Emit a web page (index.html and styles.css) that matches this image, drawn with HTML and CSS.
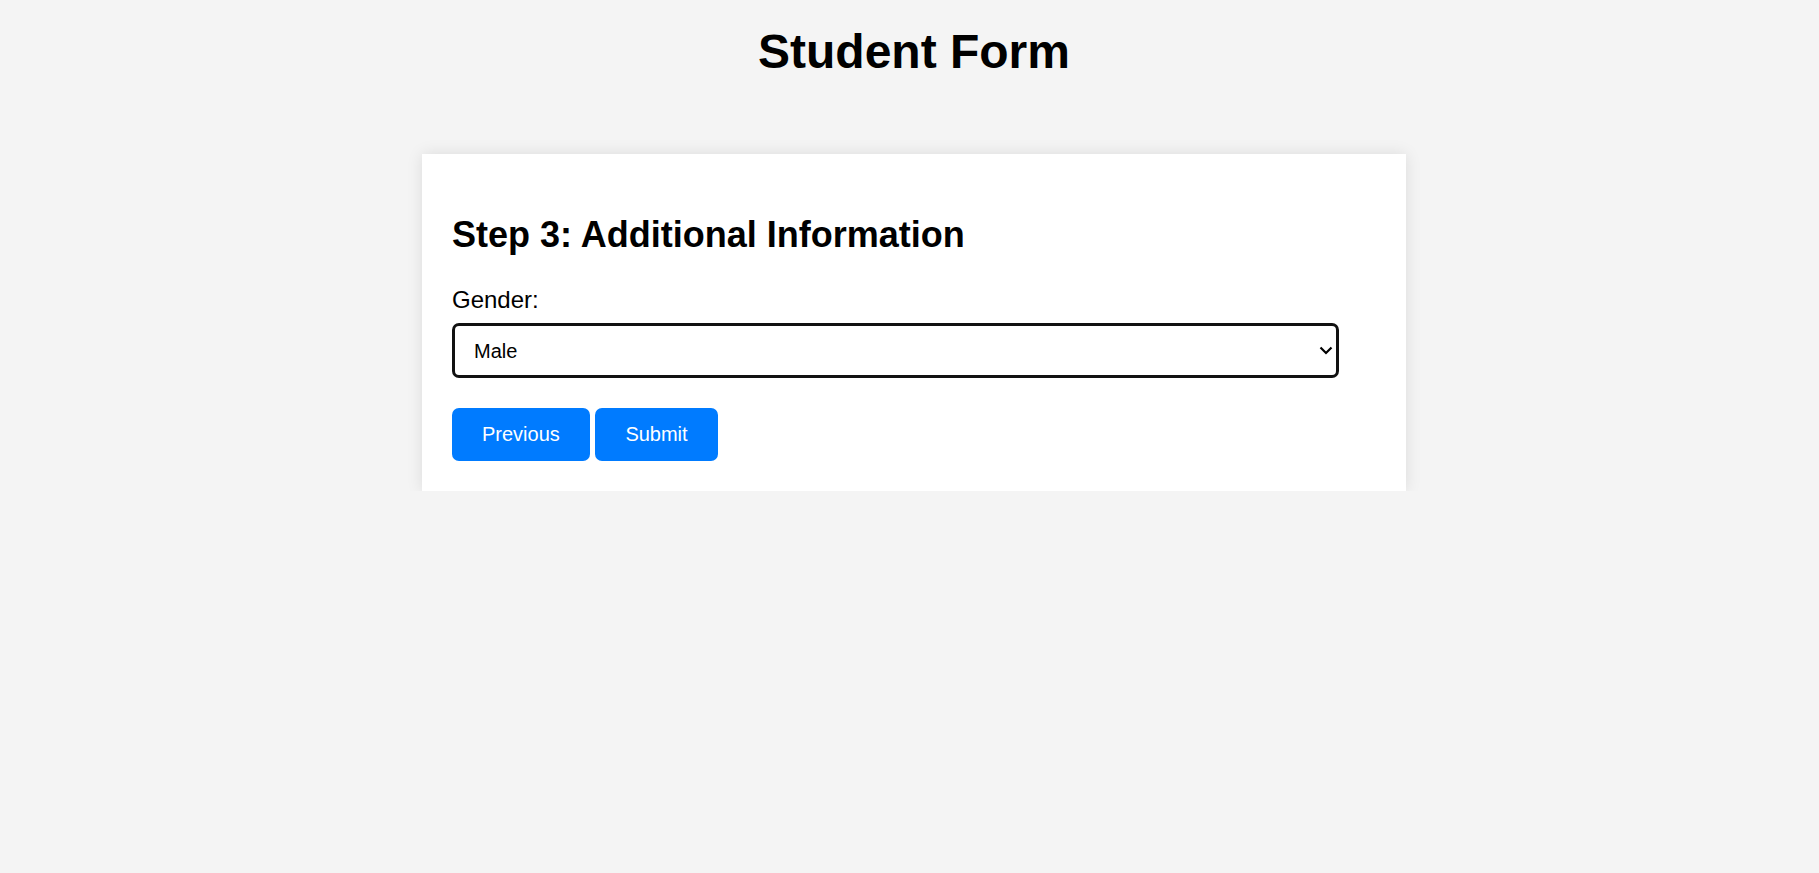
FILE: index.html
```html
<!DOCTYPE html>
<html lang="en">
<head>
<meta charset="utf-8">
<title>Student Form</title>
<link rel="stylesheet" href="styles.css">
</head>
<body>
<h1 class="page-title">Student Form</h1>
<form class="card">
  <h2 class="step-title">Step 3: Additional Information</h2>
  <label class="field-label" for="gender">Gender:</label>
  <div class="select-wrap">
    <select id="gender" class="select">
      <option>Male</option>
      <option>Female</option>
      <option>Other</option>
    </select>
    <svg class="chevron" width="14" height="9" viewBox="0 0 14 9" aria-hidden="true"><path d="M1.5 1.5 L7 7 L12.5 1.5" fill="none" stroke="#000" stroke-width="2.2"/></svg>
  </div>
  <div class="actions">
    <button type="button" class="btn">Previous</button> <button type="button" class="btn">Submit</button>
  </div>
</form>
</body>
</html>
```

FILE: styles.css
```css
html, body {
  margin: 0;
  padding: 0;
}
body {
  background: #f4f4f4;
  font-family: "Liberation Sans", Arial, sans-serif;
  color: #000;
  padding-left: 9px;
  display: flex;
  flex-direction: column;
  align-items: center;
}
.page-title {
  font-size: 48px;
  font-weight: bold;
  line-height: 55px;
  margin: 24px 0 75px;
  text-align: center;
}
.card {
  box-sizing: border-box;
  width: 984px;
  background: #fff;
  padding: 30px;
  box-shadow: 0 0 15px rgba(0, 0, 0, 0.1);
}
.step-title {
  font-size: 36px;
  font-weight: bold;
  line-height: 41.5px;
  margin: 30px 0 30px;
}
.field-label {
  display: block;
  font-size: 24px;
  line-height: 27.5px;
  margin-bottom: 10px;
}
.select-wrap {
  position: relative;
  width: 96%;
  margin-bottom: 30px;
}
.select {
  -webkit-appearance: none;
  appearance: none;
  box-sizing: border-box;
  display: block;
  width: 100%;
  height: 55px;
  border: 3px solid #111;
  border-radius: 7px;
  background: #fff;
  font-family: "Liberation Sans", Arial, sans-serif;
  font-size: 20px;
  color: #000;
  padding: 0 40px 0 19px;
  margin: 0;
  outline: none;
}
.chevron {
  position: absolute;
  right: 6px;
  top: 23px;
  pointer-events: none;
}
.actions {
  font-size: 20px;
  line-height: 23px;
}
.btn {
  display: inline-block;
  box-sizing: border-box;
  height: 53px;
  padding: 0 30px;
  border: none;
  border-radius: 7px;
  background: #007bff;
  color: #fff;
  font-family: "Liberation Sans", Arial, sans-serif;
  font-size: 20px;
  line-height: 23px;
  cursor: pointer;
  vertical-align: top;
}
```
